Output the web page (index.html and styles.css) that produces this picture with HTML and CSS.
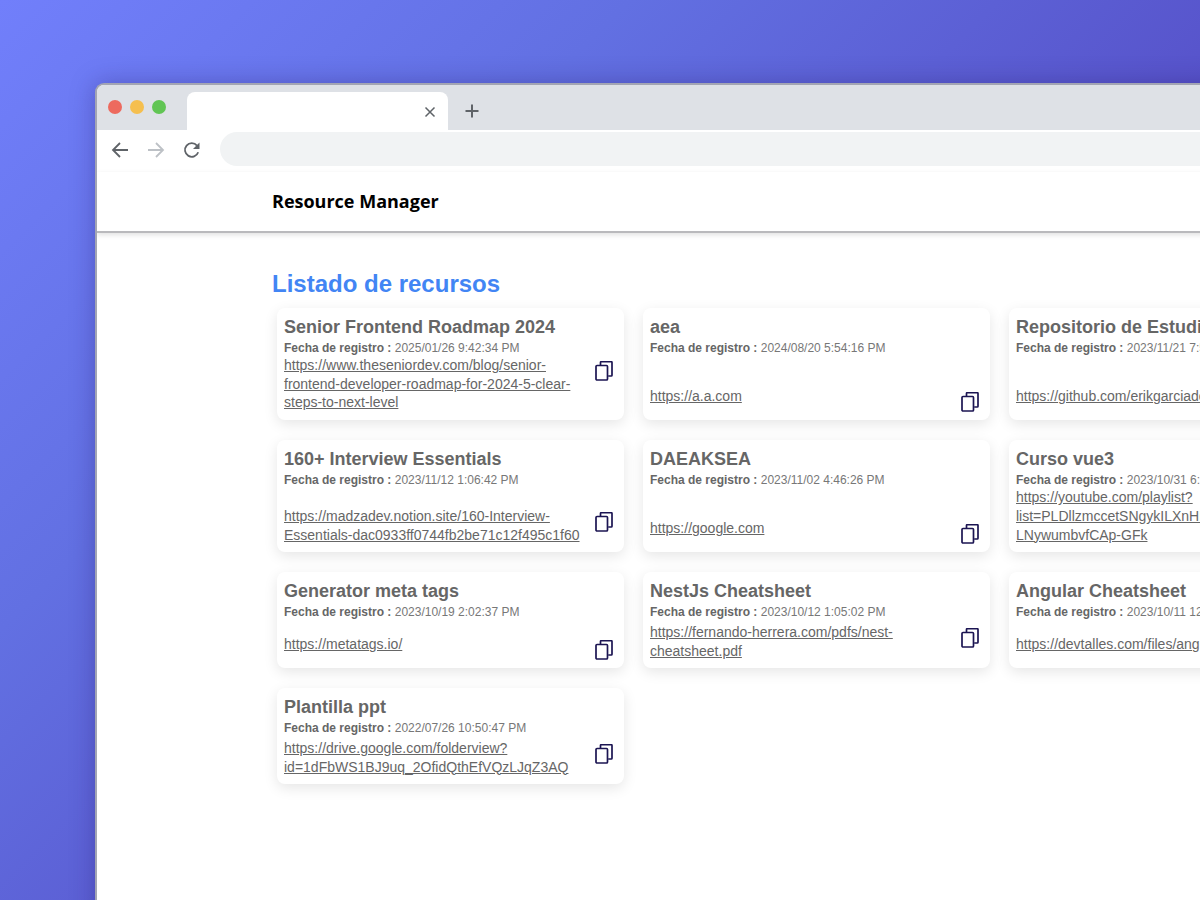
FILE: index.html
```html
<!DOCTYPE html>
<html lang="es">
<head>
<meta charset="utf-8">
<title>Resource Manager</title>
<link rel="stylesheet" href="styles.css">
</head>
<body>
<div class="window">
  <div class="tabbar">
    <div class="lights"><span class="light red"></span><span class="light yellow"></span><span class="light green"></span></div>
    <div class="tab">
      <svg class="tab-close" width="12" height="12" viewBox="0 0 12 12"><path d="M1.5 1.5l9 9M10.5 1.5l-9 9" stroke="#5f6368" stroke-width="1.5" fill="none"/></svg>
    </div>
    <svg class="tab-new" width="14" height="14" viewBox="0 0 14 14"><path d="M7 0.5v13M0.5 7h13" stroke="#5f6368" stroke-width="2" fill="none"/></svg>
  </div>
  <div class="toolbar">
    <svg class="nav" width="18" height="18" viewBox="0 0 18 18"><path d="M17 9H2M9 2L2 9l7 7" stroke="#5f6368" stroke-width="1.8" fill="none"/></svg>
    <svg class="nav" width="18" height="18" viewBox="0 0 18 18"><path d="M1 9h15M9 2l7 7-7 7" stroke="#bdc1c6" stroke-width="1.8" fill="none"/></svg>
    <svg class="nav" width="18" height="18" viewBox="0 0 18 18"><path d="M15.2 11.2A6.8 6.8 0 1 1 14 4.6" stroke="#5f6368" stroke-width="1.8" fill="none"/><path d="M16.5 1.5v6.5H10z" fill="#5f6368"/></svg>
    <div class="address"></div>
  </div>
  <header class="app-header"><div class="brand">Resource Manager</div></header>
  <main class="content">
    <h1 class="page-title">Listado de recursos</h1>
    <div class="grid">
      <article class="card">
        <h2 class="card-title">Senior Frontend Roadmap 2024</h2>
        <p class="card-date"><b>Fecha de registro :</b> 2025/01/26 9:42:34 PM</p>
        <div class="card-link-row"><a class="card-link" href="#">https://www.theseniordev.com/blog/senior-frontend-developer-roadmap-for-2024-5-clear-steps-to-next-level</a>
          <svg class="copy" width="18" height="20" viewBox="0 0 18 20"><path d="M5.5 4V1.5a.8.8 0 0 1 .8-.8h9.9a.8.8 0 0 1 .8.8v12.7a.8.8 0 0 1-.8.8h-3" fill="none" stroke="#1b1452" stroke-width="1.7"/><rect x="1" y="4.5" width="11.5" height="14.5" rx="1" fill="#fff" stroke="#1b1452" stroke-width="1.7"/></svg></div>
      </article>
      <article class="card">
        <h2 class="card-title">aea</h2>
        <p class="card-date"><b>Fecha de registro :</b> 2024/08/20 5:54:16 PM</p>
        <div class="card-link-row"><a class="card-link" href="#">https://a.a.com</a>
          <svg class="copy" width="18" height="20" viewBox="0 0 18 20"><path d="M5.5 4V1.5a.8.8 0 0 1 .8-.8h9.9a.8.8 0 0 1 .8.8v12.7a.8.8 0 0 1-.8.8h-3" fill="none" stroke="#1b1452" stroke-width="1.7"/><rect x="1" y="4.5" width="11.5" height="14.5" rx="1" fill="#fff" stroke="#1b1452" stroke-width="1.7"/></svg></div>
      </article>
      <article class="card">
        <h2 class="card-title">Repositorio de Estudio</h2>
        <p class="card-date"><b>Fecha de registro :</b> 2023/11/21 7:55:10 PM</p>
        <div class="card-link-row"><a class="card-link" href="#">https://github.com/erikgarciadev</a>
          <svg class="copy" width="18" height="20" viewBox="0 0 18 20"><path d="M5.5 4V1.5a.8.8 0 0 1 .8-.8h9.9a.8.8 0 0 1 .8.8v12.7a.8.8 0 0 1-.8.8h-3" fill="none" stroke="#1b1452" stroke-width="1.7"/><rect x="1" y="4.5" width="11.5" height="14.5" rx="1" fill="#fff" stroke="#1b1452" stroke-width="1.7"/></svg></div>
      </article>
      <article class="card">
        <h2 class="card-title">160+ Interview Essentials</h2>
        <p class="card-date"><b>Fecha de registro :</b> 2023/11/12 1:06:42 PM</p>
        <div class="card-link-row"><a class="card-link" href="#">https://madzadev.notion.site/160-Interview-Essentials-dac0933ff0744fb2be71c12f495c1f60</a>
          <svg class="copy" width="18" height="20" viewBox="0 0 18 20"><path d="M5.5 4V1.5a.8.8 0 0 1 .8-.8h9.9a.8.8 0 0 1 .8.8v12.7a.8.8 0 0 1-.8.8h-3" fill="none" stroke="#1b1452" stroke-width="1.7"/><rect x="1" y="4.5" width="11.5" height="14.5" rx="1" fill="#fff" stroke="#1b1452" stroke-width="1.7"/></svg></div>
      </article>
      <article class="card">
        <h2 class="card-title">DAEAKSEA</h2>
        <p class="card-date"><b>Fecha de registro :</b> 2023/11/02 4:46:26 PM</p>
        <div class="card-link-row"><a class="card-link" href="#">https://google.com</a>
          <svg class="copy" width="18" height="20" viewBox="0 0 18 20"><path d="M5.5 4V1.5a.8.8 0 0 1 .8-.8h9.9a.8.8 0 0 1 .8.8v12.7a.8.8 0 0 1-.8.8h-3" fill="none" stroke="#1b1452" stroke-width="1.7"/><rect x="1" y="4.5" width="11.5" height="14.5" rx="1" fill="#fff" stroke="#1b1452" stroke-width="1.7"/></svg></div>
      </article>
      <article class="card">
        <h2 class="card-title">Curso vue3</h2>
        <p class="card-date"><b>Fecha de registro :</b> 2023/10/31 6:54:12 PM</p>
        <div class="card-link-row"><a class="card-link" href="#">https://youtube.com/playlist?list=PLDllzmccetSNgykILXnHMeKvFKyJxhi&amp;si=LNywumbvfCAp-GFk</a>
          <svg class="copy" width="18" height="20" viewBox="0 0 18 20"><path d="M5.5 4V1.5a.8.8 0 0 1 .8-.8h9.9a.8.8 0 0 1 .8.8v12.7a.8.8 0 0 1-.8.8h-3" fill="none" stroke="#1b1452" stroke-width="1.7"/><rect x="1" y="4.5" width="11.5" height="14.5" rx="1" fill="#fff" stroke="#1b1452" stroke-width="1.7"/></svg></div>
      </article>
      <article class="card">
        <h2 class="card-title">Generator meta tags</h2>
        <p class="card-date"><b>Fecha de registro :</b> 2023/10/19 2:02:37 PM</p>
        <div class="card-link-row"><a class="card-link" href="#">https://metatags.io/</a>
          <svg class="copy" width="18" height="20" viewBox="0 0 18 20"><path d="M5.5 4V1.5a.8.8 0 0 1 .8-.8h9.9a.8.8 0 0 1 .8.8v12.7a.8.8 0 0 1-.8.8h-3" fill="none" stroke="#1b1452" stroke-width="1.7"/><rect x="1" y="4.5" width="11.5" height="14.5" rx="1" fill="#fff" stroke="#1b1452" stroke-width="1.7"/></svg></div>
      </article>
      <article class="card">
        <h2 class="card-title">NestJs Cheatsheet</h2>
        <p class="card-date"><b>Fecha de registro :</b> 2023/10/12 1:05:02 PM</p>
        <div class="card-link-row"><a class="card-link" href="#">https://fernando-herrera.com/pdfs/nest-cheatsheet.pdf</a>
          <svg class="copy" width="18" height="20" viewBox="0 0 18 20"><path d="M5.5 4V1.5a.8.8 0 0 1 .8-.8h9.9a.8.8 0 0 1 .8.8v12.7a.8.8 0 0 1-.8.8h-3" fill="none" stroke="#1b1452" stroke-width="1.7"/><rect x="1" y="4.5" width="11.5" height="14.5" rx="1" fill="#fff" stroke="#1b1452" stroke-width="1.7"/></svg></div>
      </article>
      <article class="card">
        <h2 class="card-title">Angular Cheatsheet</h2>
        <p class="card-date"><b>Fecha de registro :</b> 2023/10/11 12:31:08 PM</p>
        <div class="card-link-row"><a class="card-link" href="#">https://devtalles.com/files/angular</a>
          <svg class="copy" width="18" height="20" viewBox="0 0 18 20"><path d="M5.5 4V1.5a.8.8 0 0 1 .8-.8h9.9a.8.8 0 0 1 .8.8v12.7a.8.8 0 0 1-.8.8h-3" fill="none" stroke="#1b1452" stroke-width="1.7"/><rect x="1" y="4.5" width="11.5" height="14.5" rx="1" fill="#fff" stroke="#1b1452" stroke-width="1.7"/></svg></div>
      </article>
      <article class="card">
        <h2 class="card-title">Plantilla ppt</h2>
        <p class="card-date"><b>Fecha de registro :</b> 2022/07/26 10:50:47 PM</p>
        <div class="card-link-row"><a class="card-link" href="#">https://drive.google.com/folderview?id=1dFbWS1BJ9uq_2OfidQthEfVQzLJqZ3AQ</a>
          <svg class="copy" width="18" height="20" viewBox="0 0 18 20"><path d="M5.5 4V1.5a.8.8 0 0 1 .8-.8h9.9a.8.8 0 0 1 .8.8v12.7a.8.8 0 0 1-.8.8h-3" fill="none" stroke="#1b1452" stroke-width="1.7"/><rect x="1" y="4.5" width="11.5" height="14.5" rx="1" fill="#fff" stroke="#1b1452" stroke-width="1.7"/></svg></div>
      </article>
    </div>
  </main>
</div>
</body>
</html>
```
FILE: styles.css
```css
* { box-sizing: border-box; }
html, body { margin: 0; height: 900px; overflow: hidden; }
body {
  width: 1200px;
  padding: 83px 0 0 95px;
  background: linear-gradient(135deg, #717ffb 0%, #6270e2 30%, #5650c8 65%, #4f45b8 100%);
  font-family: "Liberation Sans", Arial, sans-serif;
}
.window {
  width: 1300px;
  height: 1000px;
  background: #fff;
  border: 2px solid #a3a5b3;
  border-right: 0;
  border-radius: 9px 0 0 0;
  overflow: hidden;
  box-shadow: 0 0 24px rgba(40, 30, 110, 0.35);
}
.tabbar {
  height: 45px;
  padding: 7px 0 0 11px;
  background: #dee1e6;
  display: flex;
  align-items: flex-start;
}
.lights { display: flex; gap: 8px; padding-top: 8px; }
.light { width: 14px; height: 14px; border-radius: 50%; }
.red { background: #ed6a5e; }
.yellow { background: #f5bf4f; }
.green { background: #61c554; }
.tab {
  width: 261px;
  height: 38px;
  margin-left: 21px;
  background: #fff;
  border-radius: 8px 8px 0 0;
  display: flex;
  align-items: center;
  justify-content: flex-end;
  padding: 0 12px 0 0;
}
.tab-close { margin-bottom: -1px; }
.tab-new { margin: 12px 0 0 17px; }
.toolbar {
  height: 42px;
  display: flex;
  align-items: center;
  padding-left: 14px;
  gap: 18px;
  background: #fff;
}
.address {
  width: 1100px;
  height: 34px;
  margin: 0 0 4px 1px;
  background: #f1f3f4;
  border-radius: 17px;
}
.nav { margin-bottom: 3px; }
.app-header {
  height: 61px;
  padding-left: 175px;
  display: flex;
  align-items: center;
  border-bottom: 2px solid #b9b9bc;
  box-shadow: 0 2px 5px rgba(0, 0, 0, 0.12);
}
.brand {
  font-family: "Open Sans", sans-serif;
  font-size: 18px;
  font-weight: 700;
  color: #000;
  padding-bottom: 2px;
}
.content { padding: 36px 0 0 175px; }
.page-title {
  margin: 0 0 9px;
  font-size: 24px;
  line-height: 30px;
  font-weight: 700;
  color: #4285f4;
}
.grid {
  display: grid;
  grid-template-columns: repeat(3, 347px);
  column-gap: 19px;
  row-gap: 20px;
  padding-left: 5px;
}
.card {
  min-height: 96px;
  padding: 8px 7px;
  background: #fff;
  border-radius: 8px;
  display: flex;
  flex-direction: column;
  box-shadow: 0 4px 14px rgba(0, 0, 0, 0.1);
}
.card-title {
  margin: 0;
  font-size: 18px;
  line-height: 22px;
  font-weight: 700;
  color: #666;
}
.card-date {
  margin: 2px 0 0;
  font-size: 12px;
  line-height: 16px;
  color: #777;
}
.card-date b { color: #666; }
.card-link-row {
  margin-top: auto;
  display: flex;
  align-items: flex-start;
  gap: 12px;
}
.card-link {
  width: 299px;
  flex: none;
  font-size: 14px;
  line-height: 18.7px;
  color: #666;
  overflow-wrap: anywhere;
}
.copy { flex: none; margin-top: 5px; }
```
